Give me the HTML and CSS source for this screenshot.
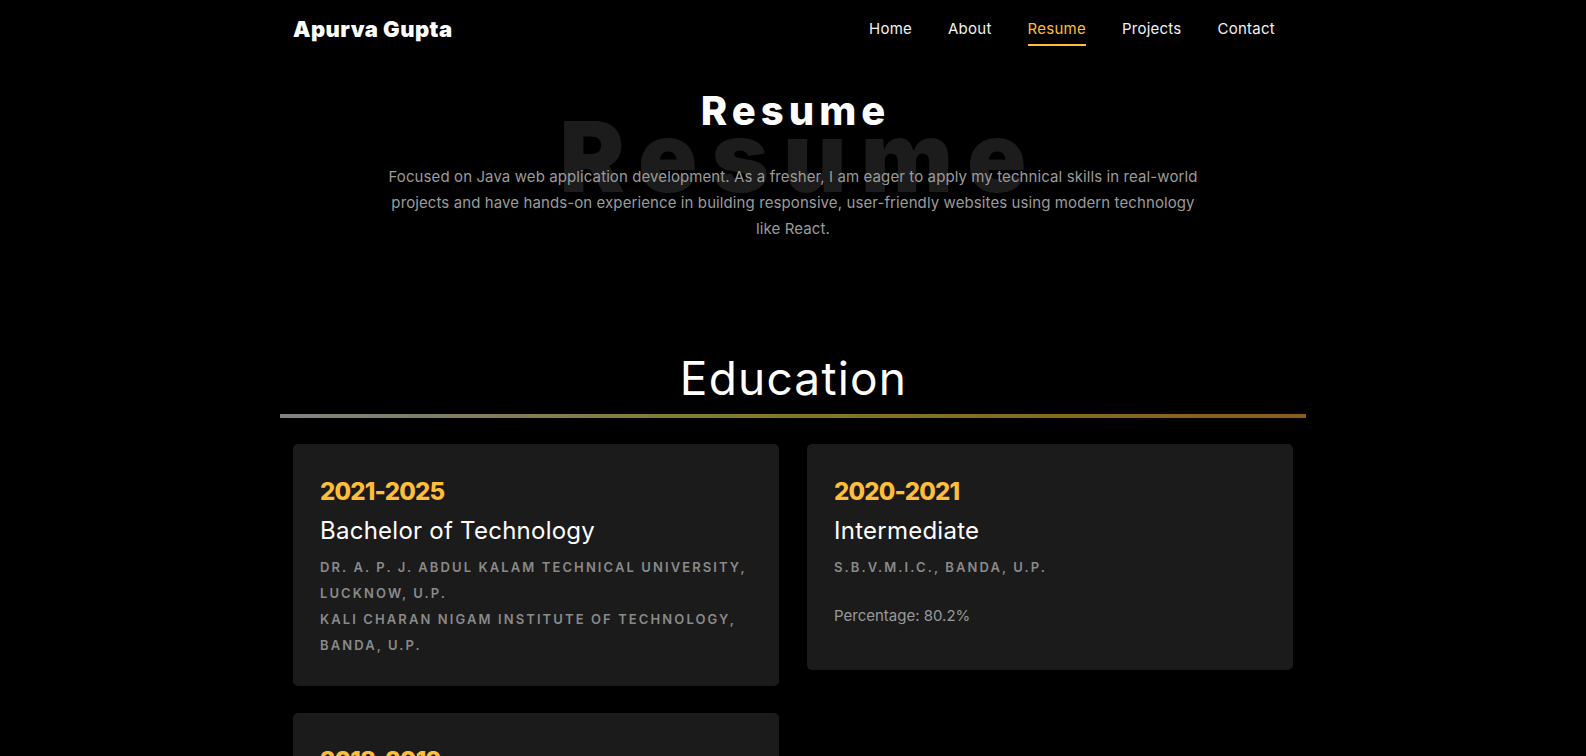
FILE: index.html
```html
<!DOCTYPE html>
<html lang="en">
<head>
<meta charset="utf-8">
<title>Apurva Gupta - Resume</title>
<link rel="stylesheet" href="styles.css">
</head>
<body>
<header class="site-header">
  <a class="logo" href="#">Apurva Gupta</a>
  <nav class="nav">
    <a class="nav-link" href="#">Home</a>
    <a class="nav-link" href="#">About</a>
    <a class="nav-link active" href="#">Resume</a>
    <a class="nav-link" href="#">Projects</a>
    <a class="nav-link" href="#">Contact</a>
  </nav>
</header>

<section class="hero">
  <div class="hero-bg">Resume</div>
  <h1 class="hero-title">Resume</h1>
  <p class="hero-text">Focused on Java web application development. As a fresher, I am eager to apply my technical skills in real-world projects and have hands-on experience in building responsive, user-friendly websites using modern technology like React.</p>
</section>

<section class="education">
  <h2 class="section-title">Education</h2>
  <div class="divider"></div>
  <div class="cards">
    <div class="card">
      <div class="year">2021-2025</div>
      <h3 class="degree">Bachelor of Technology</h3>
      <div class="school">Dr. A. P. J. Abdul Kalam Technical University, Lucknow, U.P.</div>
      <div class="school">Kali Charan Nigam Institute of Technology, Banda, U.P.</div>
    </div>
    <div class="card">
      <div class="year">2020-2021</div>
      <h3 class="degree">Intermediate</h3>
      <div class="school">S.B.V.M.I.C., Banda, U.P.</div>
      <p class="score">Percentage: 80.2%</p>
    </div>
    <div class="card">
      <div class="year">2018-2019</div>
      <h3 class="degree">High School</h3>
      <div class="school">S.B.V.M.I.C., Banda, U.P.</div>
      <p class="score">Percentage: 85.5%</p>
    </div>
  </div>
</section>
</body>
</html>
```

FILE: styles.css
```css
* { box-sizing: border-box; }

body {
  margin: 0;
  background: #000;
  color: #fff;
  font-family: Inter, "Open Sans", Arial, sans-serif;
}

a { text-decoration: none; color: inherit; }

.site-header {
  width: 1000px;
  margin: 0 auto;
  height: 57px;
  display: flex;
  align-items: center;
  justify-content: space-between;
}

.logo {
  font-size: 22px;
  font-weight: 900;
  color: #fff;
  letter-spacing: 0.45px;
}

.nav {
  display: flex;
  align-items: center;
}

.nav-link {
  position: relative;
  display: block;
  padding: 0 18px;
  line-height: 22px;
  font-size: 15px;
  letter-spacing: 0.25px;
  color: #f2f2f2;
}

.nav-link.active { color: #ffbd39; }

.nav-link.active::after {
  content: "";
  position: absolute;
  left: 18px;
  right: 18px;
  bottom: -6px;
  height: 2px;
  background: #ffbd39;
}

.hero {
  position: relative;
  text-align: center;
  padding-top: 30px;
}

.hero-bg {
  position: absolute;
  left: 0;
  right: 0;
  top: 51px;
  padding-left: 14px;
  font-size: 98px;
  font-weight: 900;
  line-height: 1;
  letter-spacing: 14px;
  color: #1c1c1c;
  z-index: 0;
}

.hero-title {
  position: relative;
  z-index: 1;
  margin: 0;
  padding-left: 5px;
  font-size: 40px;
  line-height: 48px;
  font-weight: 800;
  letter-spacing: 5px;
}

.hero-text {
  position: relative;
  z-index: 1;
  width: 820px;
  margin: 29px auto 0;
  font-size: 15px;
  line-height: 26px;
  letter-spacing: 0.1px;
  color: #9b9b9b;
}

.education {
  margin-top: 108px;
  padding-bottom: 60px;
}

.section-title {
  margin: 0;
  text-align: center;
  padding-left: 1px;
  font-size: 46px;
  line-height: 56px;
  font-weight: 400;
  letter-spacing: 1.2px;
}

.divider {
  width: 1026px;
  height: 4px;
  margin: 8px auto 0;
  background: linear-gradient(to right, #828282, #807a1c 50%, #8c5b1e);
}

.cards {
  width: 1000px;
  margin: 26px auto 0;
  display: grid;
  grid-template-columns: 1fr 1fr;
  column-gap: 28px;
  row-gap: 27px;
  align-items: start;
}

.card {
  background: #1b1b1b;
  border-radius: 5px;
  padding: 34px 22px 28px 27px;
}

.year {
  font-size: 24px;
  line-height: 1.2;
  font-weight: 800;
  letter-spacing: -0.8px;
  color: #ffbd39;
}

.degree {
  margin: 10px 0 0;
  font-size: 24px;
  line-height: 1.2;
  font-weight: 400;
  letter-spacing: 0.25px;
}

.school {
  font-size: 13px;
  line-height: 26px;
  font-weight: 600;
  letter-spacing: 2.1px;
  text-transform: uppercase;
  color: #8a8a8a;
}

.degree + .school { margin-top: 8px; }

.score {
  margin: 23px 0 13px;
  font-size: 15px;
  line-height: 26px;
  color: #999;
}
```
